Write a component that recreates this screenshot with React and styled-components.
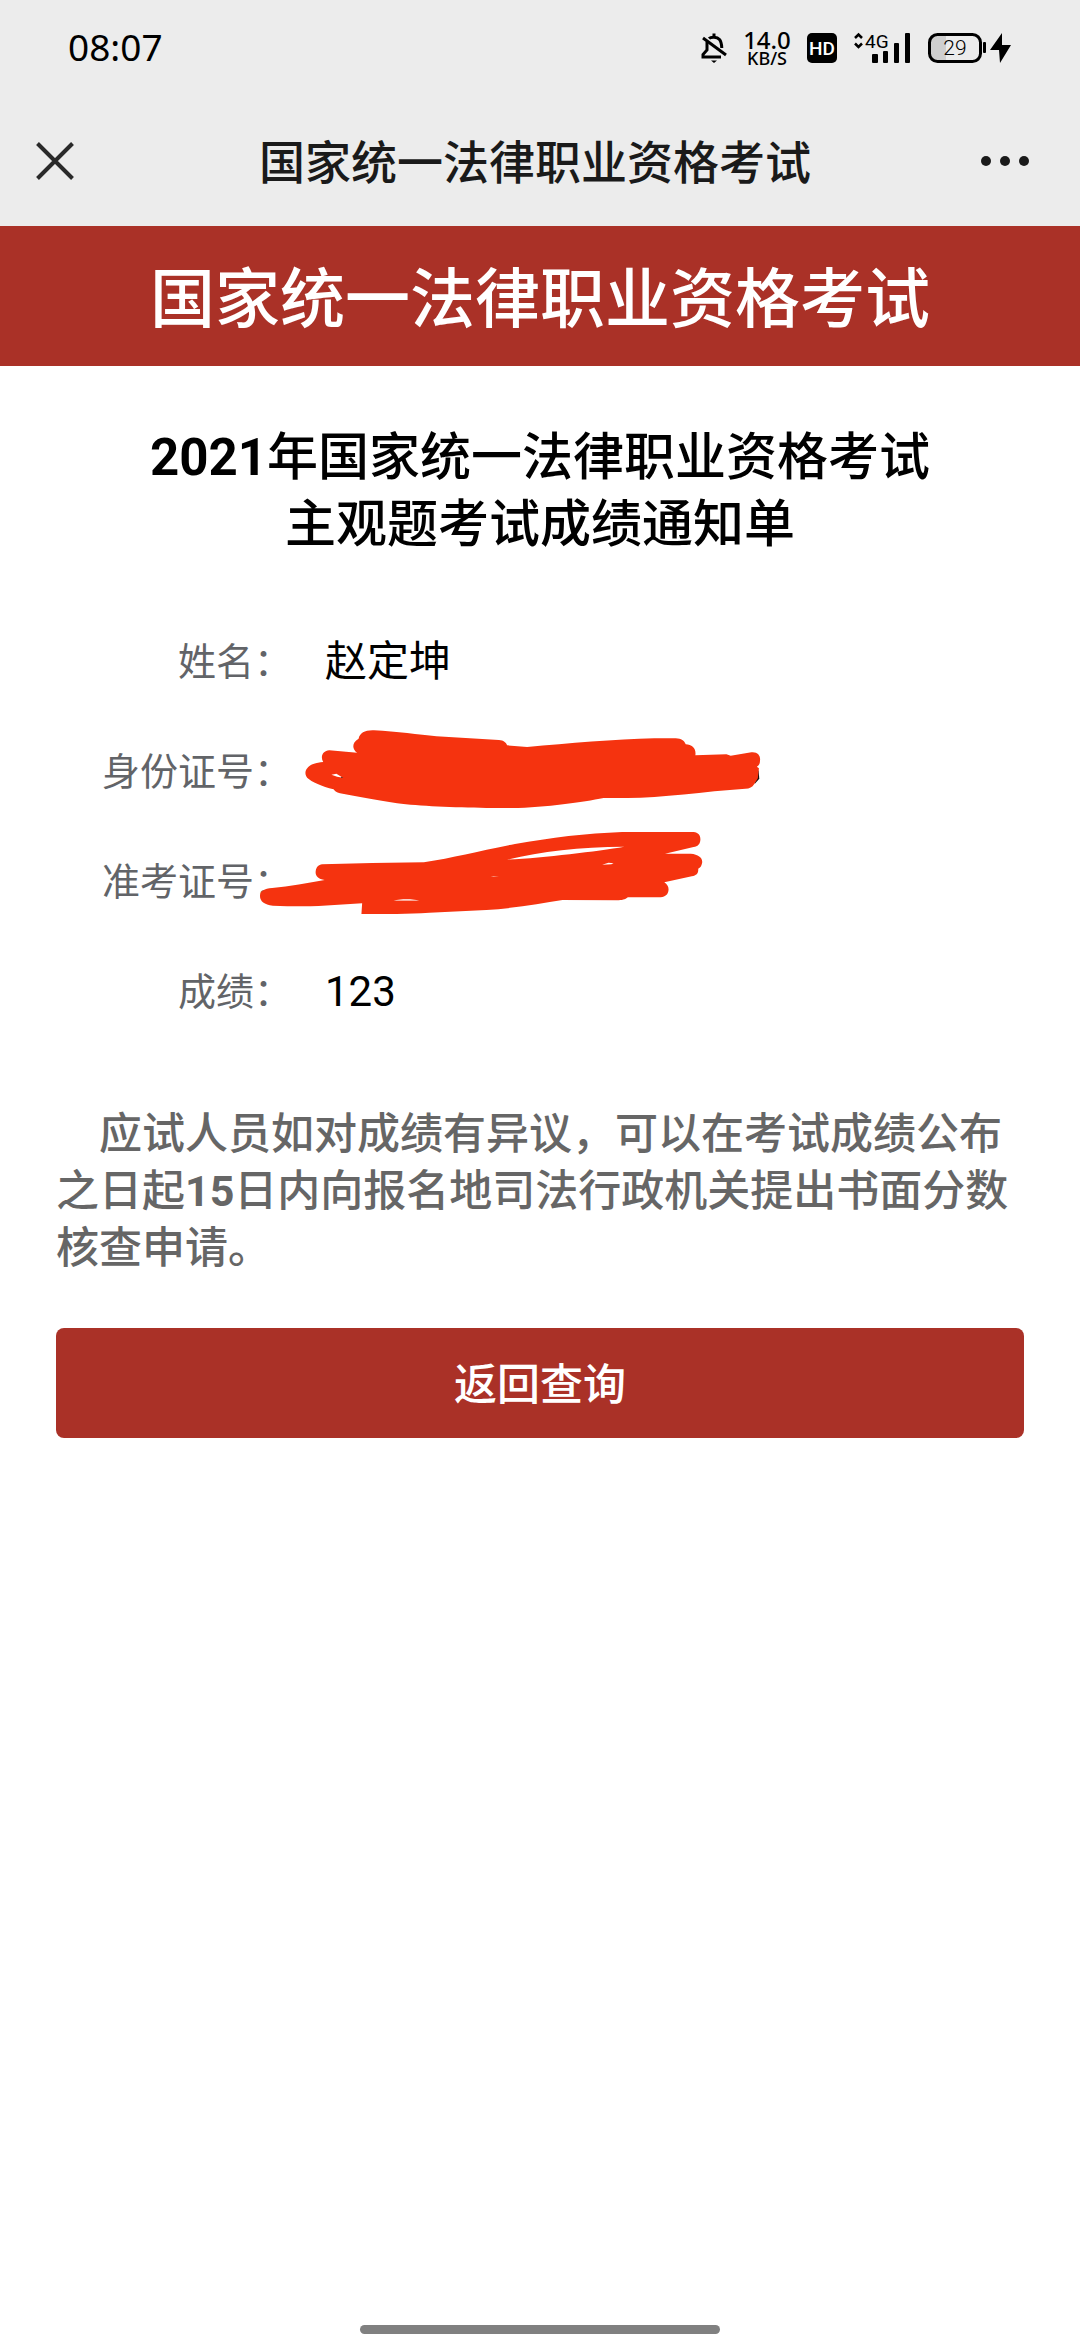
import React from "react";
import styled, { createGlobalStyle, ThemeProvider } from "styled-components";

const theme = {
  colors: {
    primary: "#aa3127",
    chrome: "#ececec",
    chromeText: "#1a1a1a",
    label: "#626468",
    note: "#666666",
    black: "#000000",
    white: "#ffffff",
    marker: "#f5330f",
    indicator: "#808080"
  }
};

const GlobalStyle = createGlobalStyle`
  *, *::before, *::after {
    box-sizing: border-box;
  }

  body {
    margin: 0;
    background: #fff;
    font-family: Roboto, "Noto Sans CJK SC", sans-serif;
  }
`;

const Page = styled.div`
  display: flex;
  flex-direction: column;
  min-height: 100vh;
  background: ${props => props.theme.colors.white};
`;

const StatusBar = styled.div`
  display: flex;
  align-items: center;
  justify-content: space-between;
  height: 96px;
  padding: 0 68px;
  background: ${props => props.theme.colors.chrome};
  color: ${props => props.theme.colors.black};
  font-family: "Noto Sans", sans-serif;
`;

const Clock = styled.time`
  padding-bottom: 2px;
  font-size: 37px;
  line-height: 48px;
`;

const StatusIcons = styled.div`
  display: flex;
  align-items: center;
  gap: 17px;

  svg {
    display: block;
    overflow: visible;
  }
`;

const NetSpeed = styled.div`
  display: flex;
  flex-direction: column;
  align-items: center;
  width: 46px;
  font-family: "Noto Sans", sans-serif;
  font-size: 24px;
  font-weight: 500;
  line-height: 20px;
`;

const NetUnit = styled.span`
  font-size: 18px;
  line-height: 16px;
`;

const HdBadge = styled.span`
  display: flex;
  align-items: center;
  justify-content: center;
  width: 30px;
  height: 30px;
  border-radius: 5px;
  background: ${props => props.theme.colors.black};
  color: ${props => props.theme.colors.white};
  font-family: Roboto, sans-serif;
  font-size: 19px;
  font-weight: 500;
`;

const NavBar = styled.header`
  display: grid;
  grid-template-columns: 120px 1fr 130px;
  align-items: center;
  height: 130px;
  background: ${props => props.theme.colors.chrome};
  color: ${props => props.theme.colors.chromeText};
`;

const NavTitle = styled.div`
  padding-top: 4px;
  font-size: 46px;
  font-weight: 500;
  line-height: 126px;
  text-align: center;
  white-space: nowrap;
`;

const NavButton = styled.button`
  display: flex;
  align-items: center;
  justify-content: ${props => (props.$end ? "flex-end" : "flex-start")};
  height: 130px;
  padding: ${props => (props.$end ? "0 50px 0 0" : "0 0 0 36px")};
  border: 0;
  background: none;
  color: inherit;
`;

const Banner = styled.h1`
  margin: 0;
  padding-top: 8px;
  background: ${props => props.theme.colors.primary};
  color: ${props => props.theme.colors.white};
  font-size: 65px;
  font-weight: 500;
  line-height: 132px;
  text-align: center;
`;

const Main = styled.main`
  display: flex;
  flex-direction: column;
  padding: 58px 56px;
`;

const Heading = styled.h2`
  margin: 0 0 48px;
  color: ${props => props.theme.colors.black};
  font-size: 51px;
  font-weight: 500;
  line-height: 67px;
  text-align: center;
`;

const Digits = styled.span`
  font-weight: 700;
`;

const Details = styled.dl`
  display: flex;
  flex-direction: column;
  margin: 0;
`;

const Row = styled.div`
  display: grid;
  grid-template-columns: 236px 1fr;
  column-gap: 33px;
  align-items: center;
  height: 110px;
`;

const Label = styled.dt`
  padding-top: 2px;
  color: ${props => props.theme.colors.label};
  font-size: 38px;
  line-height: 56px;
  text-align: right;
`;

const Value = styled.dd`
  position: relative;
  height: 110px;
  margin: 0;
  color: ${props => props.theme.colors.black};
  font-size: 42px;
  line-height: 112px;
`;

// the marker strokes run over the label column as well
const Redaction = styled.svg`
  position: absolute;
  top: 0;
  left: -85px;
  width: 560px;
  height: 110px;
  overflow: visible;
  fill: ${props => props.theme.colors.marker};
`;

const Note = styled.p`
  margin: 60px 0 51px;
  color: ${props => props.theme.colors.note};
  font-size: 43px;
  font-weight: 500;
  line-height: 57px;
  text-indent: 1em;
`;

const BackButton = styled.button`
  height: 110px;
  padding: 0 0 5px;
  border: 0;
  border-radius: 8px;
  background: ${props => props.theme.colors.primary};
  color: ${props => props.theme.colors.white};
  font-family: inherit;
  font-size: 43px;
  font-weight: 500;
`;

const HomeIndicator = styled.div`
  width: 33.33%;
  height: 9px;
  margin: auto auto 6px;
  border-radius: 5px;
  background: ${props => props.theme.colors.indicator};
`;

const BellOffIcon = () => (
  <svg width="26" height="30" viewBox="0 0 26 30" fill="none" stroke="#000" strokeWidth="3">
    <path d="M2 5L25 22" />
    <path d="M8 5.500C10 3.600 16 3.600 18.500 6.500C20.500 9 20.600 12 20.800 15" />
    <path d="M6 9V17L2 21.500V24H20" />
    <path d="M13 0.500V4" />
    <path d="M10 27.500H16L13 30Z" fill="#000" stroke="none" />
  </svg>
);

const SignalIcon = () => (
  <svg width="57" height="30" viewBox="0 0 57 30">
    <path d="M1 5L4.500 1.500L8 5M1 10.500L4.500 14L8 10.500" fill="none" stroke="#000" strokeWidth="2.500" />
    <text x="11" y="15" fontFamily="Roboto, sans-serif" fontSize="19">
      4G
    </text>
    <rect x="18" y="21" width="6" height="9" rx="1" />
    <rect x="29" y="18" width="5" height="12" rx="1" />
    <rect x="40" y="10" width="5" height="20" rx="1" />
    <rect x="51" y="0" width="5" height="30" rx="1" />
  </svg>
);

const BatteryIcon = () => (
  <svg width="84" height="30" viewBox="0 0 84 30">
    <path d="M9 2H18V28H9Q2 28 2 20V10Q2 2 9 2Z" fill="#cfcfcf" />
    <rect x="1.500" y="1.500" width="51" height="27" rx="8" fill="none" stroke="#000" strokeWidth="3" />
    <rect x="55" y="9" width="3" height="11" rx="1" />
    <text x="27" y="22" textAnchor="middle" fontFamily="Roboto, sans-serif" fontSize="21" fontWeight="300">
      29
    </text>
    <path d="M74 0L62 17H71L72 30L83 12H74Z" />
  </svg>
);

const CloseIcon = () => (
  <svg width="38" height="38" viewBox="0 0 38 38" stroke="#2a2a2a" strokeWidth="4">
    <path d="M1.500 1.500L36.500 36.500M36.500 1.500L1.500 36.500" />
  </svg>
);

const MoreIcon = () => (
  <svg width="50" height="12" viewBox="0 0 50 12" fill="currentColor">
    <circle cx="6" cy="6" r="5" />
    <circle cx="25" cy="6" r="5" />
    <circle cx="44" cy="6" r="5" />
  </svg>
);

const IdRedaction = () => (
  <Redaction viewBox="0 18 1568 330" preserveAspectRatio="none" aria-hidden="true">
    <path d="M1444 176L1452 182L1454 206L1441 222Z" fill="#111" />
    <path d="M332 86C336 68 350 60 375 61C440 65 500 74 550 79L725 90C738 91 745 97 748 106L804 111C920 100 1050 88 1160 85H1220C1236 86 1244 92 1248 103C1266 104 1278 116 1275 136L1362 133L1374 137L1432 127C1450 125 1458 138 1456 152C1456 162 1452 168 1447 170L1453 175L1450 205L1440 222C1434 232 1427 236 1415 236C1300 244 1180 264 1085 264H1018C960 276 860 293 760 294H690C600 293 500 288 440 280C380 270 330 260 280 250C270 248 264 242 262 238C230 229 200 216 188 203C178 190 184 172 203 163C212 159 222 157 233 156C224 140 232 122 250 121L328 128C314 118 312 98 332 86Z" />
    <path d="M256 194L270 191L288 203L272 200Z" fill="#fff" />
    <path d="M283 200L289 204L284 204Z" fill="#111" />
  </Redaction>
);

const TicketRedaction = () => (
  <Redaction viewBox="0 348 1568 330" preserveAspectRatio="none" aria-hidden="true">
    <path d="M230 463L370 459L515 457C600 443 670 422 770 402C870 383 970 370 1070 366H1270C1284 367 1290 378 1289 390C1288 403 1282 409 1270 411L1190 431H1262C1284 433 1296 444 1294 458C1292 468 1289 473 1283 476C1284 490 1279 496 1265 499L1188 517C1198 524 1202 534 1199 545C1196 556 1189 561 1172 562H1086C1078 569 1070 571 1055 571L903 570C840 580 770 595 690 600L530 608C470 612 410 612 340 612L342 580L220 588C170 590 130 588 92 587C68 584 56 574 56 558C56 544 68 536 90 534C140 530 190 518 237 510C218 508 210 497 212 483C214 470 220 465 230 463Z" />
    <path d="M748 449C840 425 950 411 1076 410C1000 424 850 443 748 449Z" fill="#fff" />
    <path d="M1014 464L1032 458L1046 460L1040 463Z" fill="#fff" />
    <path d="M430 572C450 566 480 565 502 572Z" fill="#fbd0c8" />
    <path d="M702 500L710 498L725 500Z" fill="#fbb0a0" />
  </Redaction>
);

const details = [
  { label: "姓名", value: "赵定坤" },
  { label: "身份证号", value: <IdRedaction /> },
  { label: "准考证号", value: <TicketRedaction /> },
  { label: "成绩", value: "123" }
];

export default () => (
  <ThemeProvider theme={theme}>
    <GlobalStyle />
    <Page lang="zh-CN">
      <StatusBar>
        <Clock>08:07</Clock>
        <StatusIcons>
          <BellOffIcon />
          <NetSpeed>
            14.0
            <NetUnit>KB/S</NetUnit>
          </NetSpeed>
          <HdBadge>HD</HdBadge>
          <SignalIcon />
          <BatteryIcon />
        </StatusIcons>
      </StatusBar>
      <NavBar>
        <NavButton type="button" aria-label="关闭">
          <CloseIcon />
        </NavButton>
        <NavTitle>国家统一法律职业资格考试</NavTitle>
        <NavButton type="button" aria-label="更多" $end>
          <MoreIcon />
        </NavButton>
      </NavBar>
      <Banner>国家统一法律职业资格考试</Banner>
      <Main>
        <Heading>
          <Digits>2021</Digits>年国家统一法律职业资格考试
          <br />
          主观题考试成绩通知单
        </Heading>
        <Details>
          {details.map(({ label, value }) => (
            <Row key={label}>
              <Label>{label}：</Label>
              <Value>{value}</Value>
            </Row>
          ))}
        </Details>
        <Note>
          应试人员如对成绩有异议，可以在考试成绩公布之日起<Digits>15</Digits>
          日内向报名地司法行政机关提出书面分数核查申请。
        </Note>
        <BackButton type="button">返回查询</BackButton>
      </Main>
      <HomeIndicator />
    </Page>
  </ThemeProvider>
);
